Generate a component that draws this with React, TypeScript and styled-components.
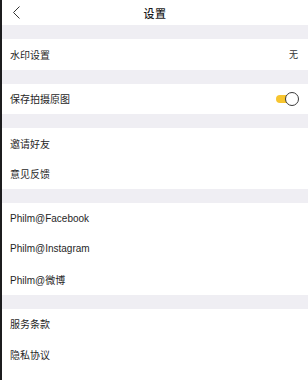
import React, { useState } from "react";
import styled, { createGlobalStyle } from "styled-components";

const GlobalStyle = createGlobalStyle`
    html, body {
        margin: 0;
        padding: 0;
        background: #ffffff;
    }
    body {
        font-family: "Liberation Sans", "Noto Sans CJK SC", sans-serif;
        -webkit-font-smoothing: antialiased;
    }
`;

const Screen = styled.div`
    width: 308px;
    height: 380px;
    box-sizing: border-box;
    border-left: 2px solid #1c1c1e;
    background: #ffffff;
    display: flex;
    flex-direction: column;
    overflow: hidden;
`;

const Header = styled.div`
    height: 25px;
    flex-shrink: 0;
    display: flex;
    align-items: center;
    justify-content: center;
    position: relative;
`;

const BackButton = styled.button`
    position: absolute;
    left: 6px;
    top: 4px;
    width: 16px;
    height: 16px;
    padding: 0;
    border: none;
    background: none;
    display: flex;
    align-items: center;
    justify-content: center;
`;

const Title = styled.h1`
    margin: 0;
    font-size: 11px;
    font-weight: 500;
    color: #1a1a1a;
    letter-spacing: 0.5px;
`;

const Spacer = styled.div`
    height: 14px;
    flex-shrink: 0;
    background: #efeef3;
`;

const Row = styled.div`
    height: 30.5px;
    flex-shrink: 0;
    display: flex;
    align-items: center;
    justify-content: space-between;
    padding: 0 10px 0 8px;
`;

const Label = styled.span`
    font-size: 10px;
    color: #1f1f1f;
`;

const Value = styled.span`
    font-size: 9px;
    color: #333333;
`;

const Track = styled.div<{ on: boolean }>`
    position: relative;
    width: 20px;
    height: 8px;
    margin-right: 2px;
    border-radius: 4px;
    background: ${props => (props.on ? "#f7c52f" : "#d9d9de")};
    cursor: pointer;
`;

const Knob = styled.div<{ on: boolean }>`
    position: absolute;
    top: -3px;
    left: ${props => (props.on ? "9px" : "-2px")};
    width: 12px;
    height: 12px;
    border-radius: 50%;
    background: #ffffff;
    border: 1px solid #3a3a3a;
`;

function Toggle() {
    const [on, setOn] = useState(true);
    return (
        <Track on={on} onClick={() => setOn(!on)}>
            <Knob on={on} />
        </Track>
    );
}

export default function App() {
    return (
        <>
            <GlobalStyle />
            <Screen>
                <Header>
                    <BackButton>
                        <svg width="9" height="13" viewBox="0 0 9 13">
                            <path d="M7.5 0.5 L1.5 6.5 L7.5 12.5" fill="none" stroke="#333" strokeWidth="1" />
                        </svg>
                    </BackButton>
                    <Title>设置</Title>
                </Header>
                <Spacer />
                <Row>
                    <Label>水印设置</Label>
                    <Value>无</Value>
                </Row>
                <Spacer />
                <Row>
                    <Label>保存拍摄原图</Label>
                    <Toggle />
                </Row>
                <Spacer />
                <Row>
                    <Label>邀请好友</Label>
                </Row>
                <Row>
                    <Label>意见反馈</Label>
                </Row>
                <Spacer />
                <Row>
                    <Label>Philm@Facebook</Label>
                </Row>
                <Row>
                    <Label>Philm@Instagram</Label>
                </Row>
                <Row>
                    <Label>Philm@微博</Label>
                </Row>
                <Spacer />
                <Row>
                    <Label>服务条款</Label>
                </Row>
                <Row>
                    <Label>隐私协议</Label>
                </Row>
            </Screen>
        </>
    );
}
